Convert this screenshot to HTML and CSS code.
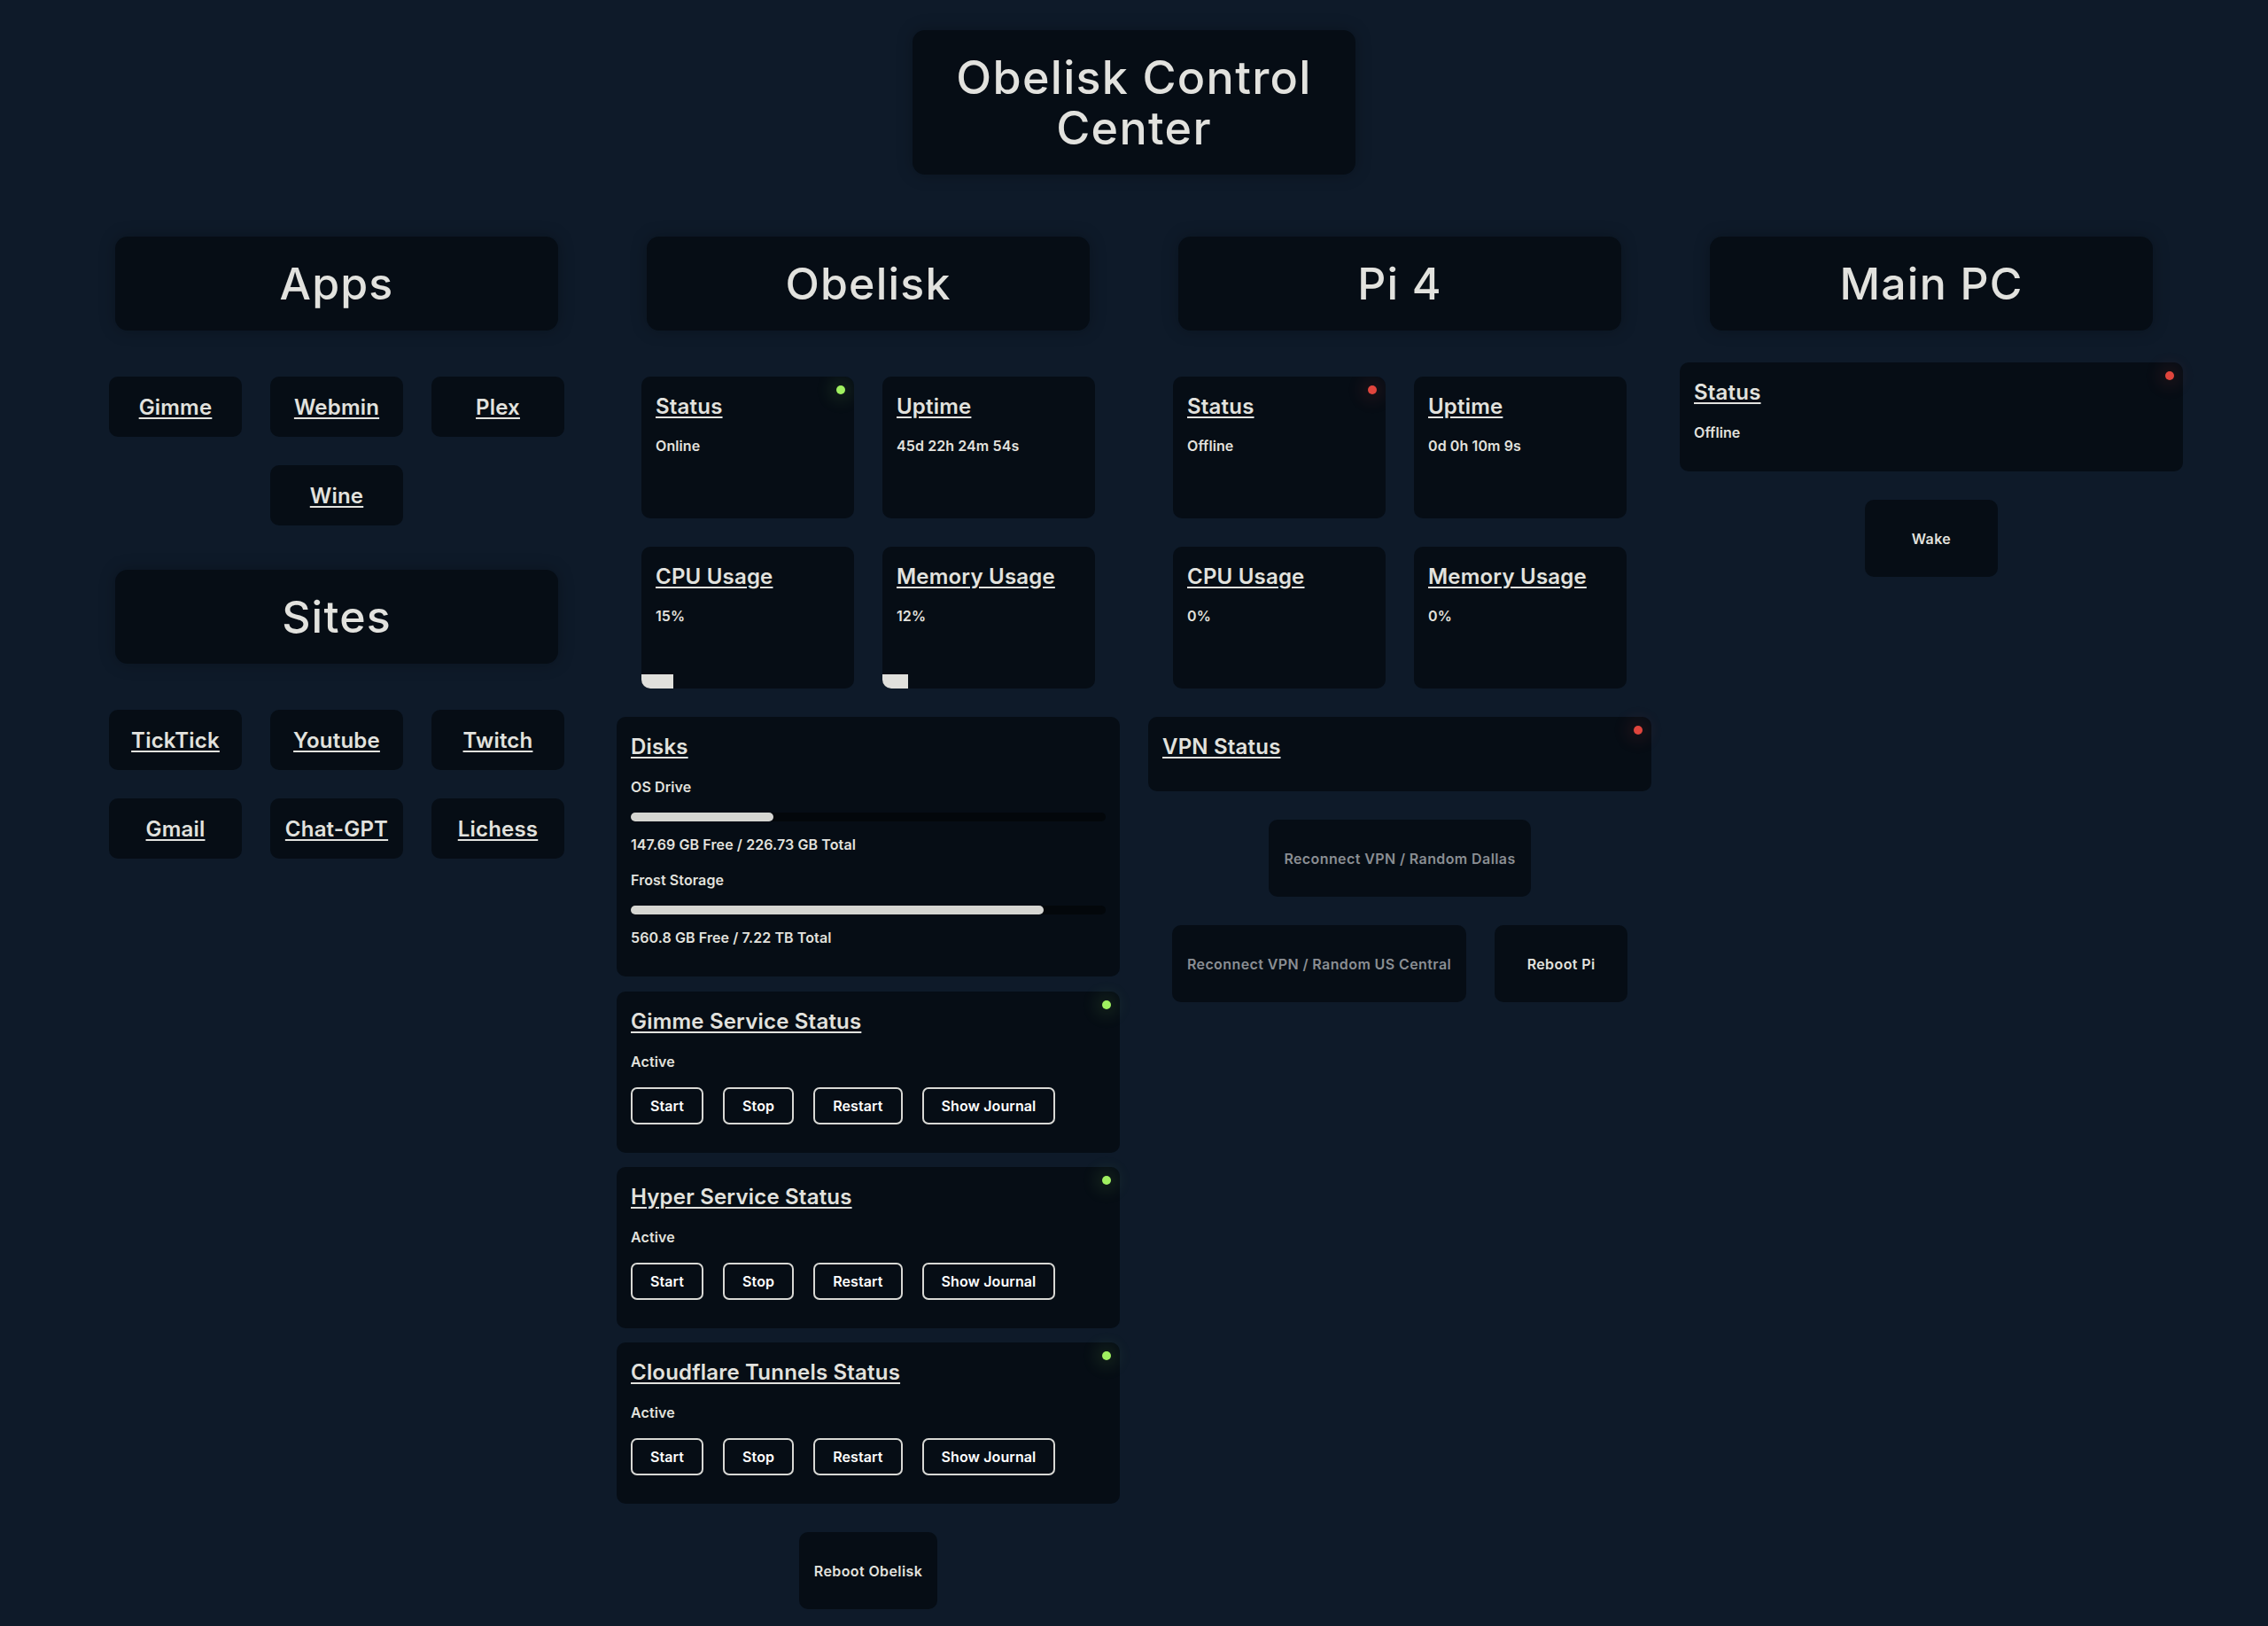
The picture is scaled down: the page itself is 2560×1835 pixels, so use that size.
FILE: index.html
```html
<!DOCTYPE html>
<html lang="en">
<head>
<meta charset="utf-8">
<title>Obelisk Control Center</title>
<link rel="stylesheet" href="styles.css">
</head>
<body>
<div class="page">
  <header class="title-box"><h1>Obelisk Control Center</h1></header>

  <main class="columns">
    <section class="col">
      <div class="col-head">Apps</div>
      <div class="links">
        <a class="link-btn" href="#">Gimme</a>
        <a class="link-btn" href="#">Webmin</a>
        <a class="link-btn" href="#">Plex</a>
        <a class="link-btn" href="#">Wine</a>
      </div>
      <div class="col-head sites-head">Sites</div>
      <div class="links">
        <a class="link-btn" href="#">TickTick</a>
        <a class="link-btn" href="#">Youtube</a>
        <a class="link-btn" href="#">Twitch</a>
        <a class="link-btn" href="#">Gmail</a>
        <a class="link-btn" href="#">Chat-GPT</a>
        <a class="link-btn" href="#">Lichess</a>
      </div>
    </section>

    <section class="col">
      <div class="col-head">Obelisk</div>
      <div class="stat-grid">
        <div class="card stat"><h3 class="card-title">Status</h3><p class="val">Online</p><span class="dot on"></span></div>
        <div class="card stat"><h3 class="card-title">Uptime</h3><p class="val">45d 22h 24m 54s</p></div>
        <div class="card stat"><h3 class="card-title">CPU Usage</h3><p class="val">15%</p><span class="usage" style="width:15%"></span></div>
        <div class="card stat"><h3 class="card-title">Memory Usage</h3><p class="val">12%</p><span class="usage" style="width:12%"></span></div>
      </div>
      <div class="card wide disks">
        <h3 class="card-title">Disks</h3>
        <div class="disk">
          <p class="val">OS Drive</p>
          <div class="track"><div class="fill" style="width:30%"></div></div>
          <p class="val">147.69 GB Free / 226.73 GB Total</p>
        </div>
        <div class="disk">
          <p class="val">Frost Storage</p>
          <div class="track"><div class="fill" style="width:87%"></div></div>
          <p class="val">560.8 GB Free / 7.22 TB Total</p>
        </div>
      </div>
      <div class="services">
        <div class="card wide service">
          <h3 class="card-title">Gimme Service Status</h3>
          <p class="val">Active</p>
          <div class="svc-btns"><button class="ol-btn">Start</button><button class="ol-btn">Stop</button><button class="ol-btn">Restart</button><button class="ol-btn">Show Journal</button></div>
          <span class="dot on"></span>
        </div>
        <div class="card wide service">
          <h3 class="card-title">Hyper Service Status</h3>
          <p class="val">Active</p>
          <div class="svc-btns"><button class="ol-btn">Start</button><button class="ol-btn">Stop</button><button class="ol-btn">Restart</button><button class="ol-btn">Show Journal</button></div>
          <span class="dot on"></span>
        </div>
        <div class="card wide service">
          <h3 class="card-title">Cloudflare Tunnels Status</h3>
          <p class="val">Active</p>
          <div class="svc-btns"><button class="ol-btn">Start</button><button class="ol-btn">Stop</button><button class="ol-btn">Restart</button><button class="ol-btn">Show Journal</button></div>
          <span class="dot on"></span>
        </div>
      </div>
      <div class="action-row"><button class="act-btn">Reboot Obelisk</button></div>
    </section>

    <section class="col">
      <div class="col-head">Pi 4</div>
      <div class="stat-grid">
        <div class="card stat"><h3 class="card-title">Status</h3><p class="val">Offline</p><span class="dot off"></span></div>
        <div class="card stat"><h3 class="card-title">Uptime</h3><p class="val">0d 0h 10m 9s</p></div>
        <div class="card stat"><h3 class="card-title">CPU Usage</h3><p class="val">0%</p></div>
        <div class="card stat"><h3 class="card-title">Memory Usage</h3><p class="val">0%</p></div>
      </div>
      <div class="card wide vpn">
        <h3 class="card-title">VPN Status</h3>
        <span class="dot off"></span>
      </div>
      <div class="action-row"><button class="act-btn dim">Reconnect VPN / Random Dallas</button></div>
      <div class="action-row"><button class="act-btn dim">Reconnect VPN / Random US Central</button><button class="act-btn">Reboot Pi</button></div>
    </section>

    <section class="col">
      <div class="col-head">Main PC</div>
      <div class="card wide pc-status">
        <h3 class="card-title">Status</h3>
        <p class="val">Offline</p>
        <span class="dot off"></span>
      </div>
      <div class="action-row"><button class="act-btn">Wake</button></div>
    </section>
  </main>
</div>
</body>
</html>
```

FILE: styles.css
```css
* { box-sizing: border-box; }

html, body {
  margin: 0;
  background: #0e1a29;
}

body {
  font-family: "Inter", "Liberation Sans", sans-serif;
  color: #e2e2de;
}

.page {
  display: flex;
  flex-direction: column;
  align-items: center;
  padding-top: 34px;
  padding-bottom: 17px;
}

.title-box {
  width: 500px;
  height: 163px;
  padding: 0 30px;
  background: #060d15;
  border-radius: 14px;
  box-shadow: 0 0 18px rgba(0, 0, 0, 0.25);
  display: flex;
  align-items: center;
  justify-content: center;
}

.title-box h1 {
  margin: 0;
  font-size: 52px;
  line-height: 57px;
  font-weight: 500;
  letter-spacing: 1.3px;
  text-align: center;
}

.columns {
  margin-top: 70px;
  width: 2400px;
  display: grid;
  grid-template-columns: repeat(4, 600px);
  align-items: start;
}

.col {
  display: flex;
  flex-direction: column;
  align-items: center;
}

.col-head {
  width: 500px;
  height: 106px;
  background: #060d15;
  border-radius: 14px;
  box-shadow: 0 0 18px rgba(0, 0, 0, 0.25);
  display: flex;
  align-items: center;
  justify-content: center;
  font-size: 50px;
  font-weight: 500;
  letter-spacing: 1.2px;
}

.sites-head { margin-top: 50px; }

.links {
  margin-top: 52px;
  width: 514px;
  display: flex;
  flex-wrap: wrap;
  justify-content: center;
  gap: 32px;
}

.link-btn {
  width: 150px;
  height: 68px;
  background: #060d15;
  border-radius: 10px;
  display: flex;
  align-items: center;
  justify-content: center;
  color: #e2e2de;
  font-size: 24px;
  font-weight: 600;
  letter-spacing: 0.2px;
  text-decoration: underline;
  text-decoration-thickness: 2px;
  text-underline-offset: 3px;
}

.card {
  position: relative;
  background: #060d15;
  border-radius: 10px;
  padding: 19px 16px 18px;
}

.card-title {
  margin: 0;
  font-size: 24px;
  line-height: 30px;
  font-weight: 600;
  letter-spacing: 0.2px;
  text-decoration: underline;
  text-decoration-thickness: 2px;
  text-underline-offset: 3px;
}

.val {
  margin: 0;
  font-size: 16px;
  line-height: 20px;
  font-weight: 600;
  letter-spacing: 0.1px;
}

.stat-grid {
  margin-top: 52px;
  display: grid;
  grid-template-columns: 240px 240px;
  gap: 32px;
}

.stat {
  height: 160px;
  overflow: hidden;
}

.stat .val { margin-top: 19px; }

.usage {
  position: absolute;
  left: 0;
  bottom: 0;
  height: 16px;
  background: #e0e0dc;
}

.dot {
  position: absolute;
  top: 10px;
  right: 10px;
  width: 10px;
  height: 10px;
  border-radius: 50%;
}

.dot.on {
  background: #a0f060;
  box-shadow: 0 0 18px 8px rgba(150, 230, 90, 0.1);
}

.dot.off {
  background: #e0453d;
  box-shadow: 0 0 18px 8px rgba(230, 70, 60, 0.1);
}

.wide { width: 568px; }

.disks {
  margin-top: 32px;
  padding-bottom: 34px;
}

.disks .card-title { margin-bottom: 20px; }

.disk + .disk { margin-top: 20px; }

.track {
  margin: 19px 0 16px;
  height: 10px;
  border-radius: 5px;
  background: #03070b;
}

.fill {
  height: 100%;
  border-radius: 5px;
  background: #d6d6d2;
}

.services {
  margin-top: 17px;
  display: flex;
  flex-direction: column;
  gap: 16px;
}

.service { padding-bottom: 32px; }

.service .val { margin-top: 20px; }

.svc-btns {
  margin-top: 19px;
  display: flex;
  gap: 22px;
}

.ol-btn {
  height: 42px;
  padding: 0 20px;
  background: transparent;
  border: 2px solid #d8d8d4;
  border-radius: 7px;
  color: #ffffff;
  font-family: inherit;
  font-size: 16px;
  font-weight: 600;
  letter-spacing: 0.1px;
}

.action-row {
  margin-top: 32px;
  display: flex;
  justify-content: center;
  gap: 32px;
}

.act-btn {
  min-width: 150px;
  height: 87px;
  padding: 0 17px;
  background: #060d15;
  border: none;
  border-radius: 10px;
  color: #e2e2de;
  font-family: inherit;
  font-size: 16px;
  font-weight: 600;
  letter-spacing: 0.4px;
}

.act-btn.dim { color: #8a8e93; }

.vpn {
  margin-top: 32px;
  padding-bottom: 35px;
}

.pc-status {
  margin-top: 36px;
  padding-bottom: 34px;
}

.pc-status .val { margin-top: 20px; }
```
